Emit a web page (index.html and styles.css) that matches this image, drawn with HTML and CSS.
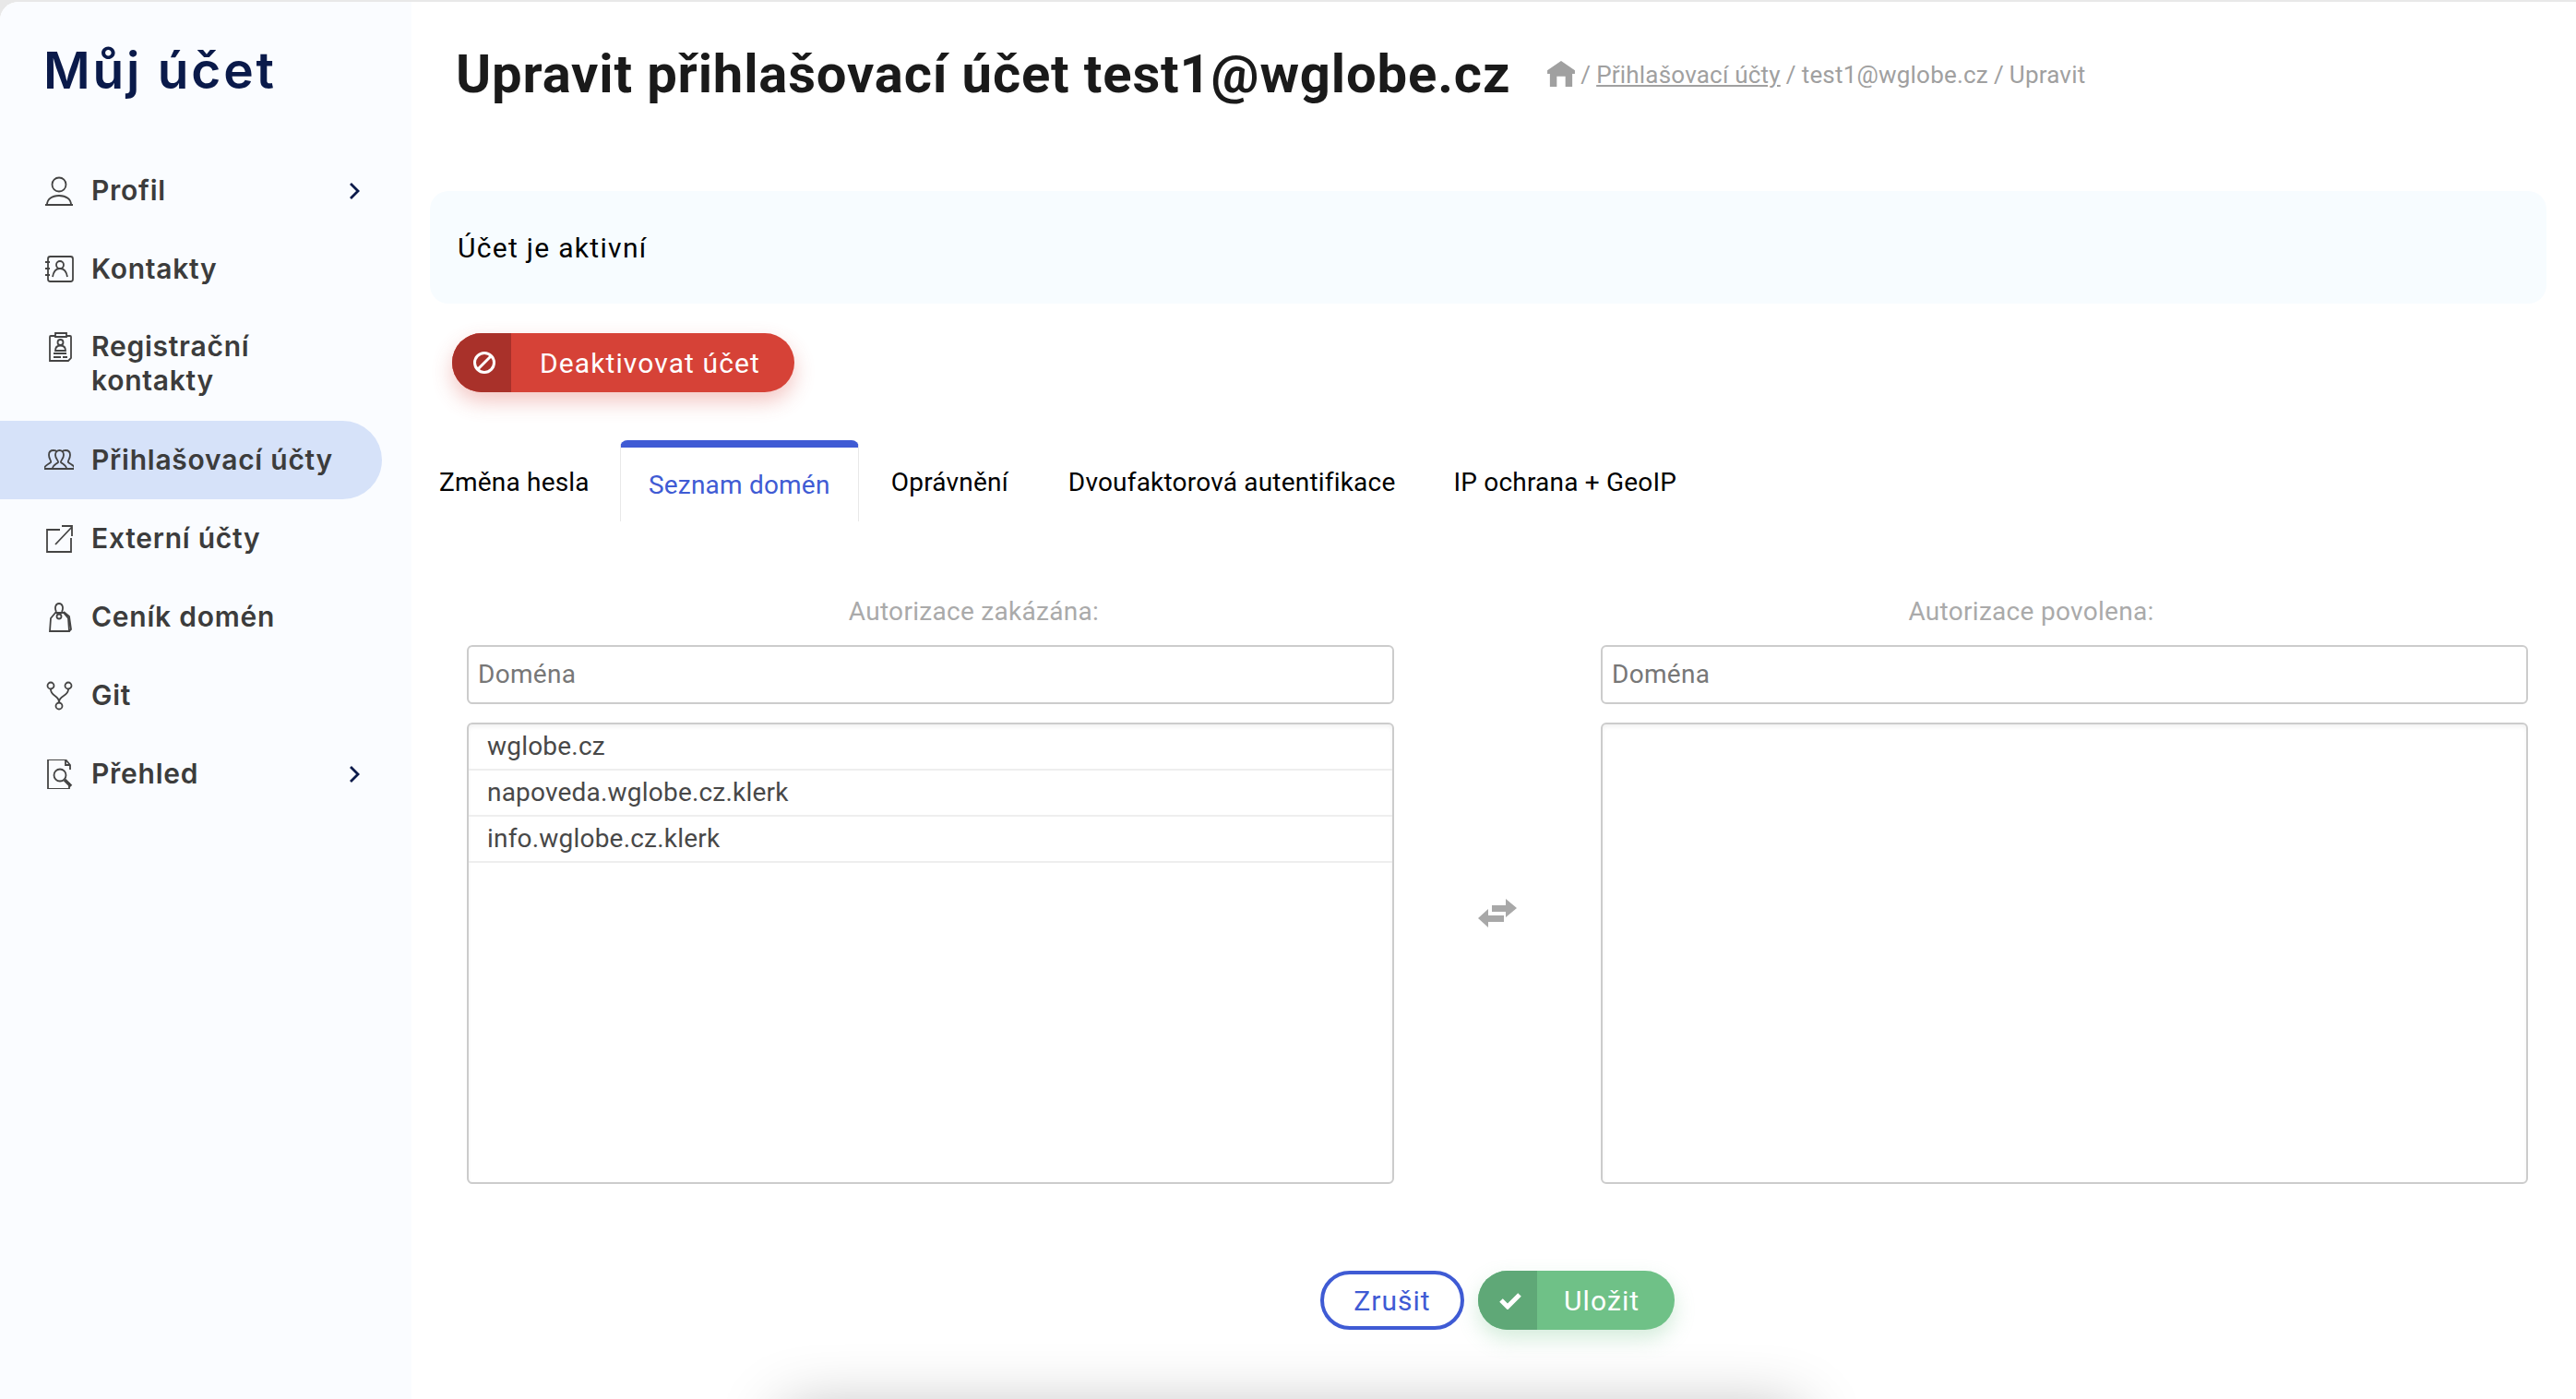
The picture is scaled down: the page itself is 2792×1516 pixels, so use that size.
FILE: index.html
```html
<!DOCTYPE html>
<html lang="cs">
<head>
<meta charset="utf-8">
<title>Upravit přihlašovací účet</title>
<link rel="stylesheet" href="styles.css">
</head>
<body>
<div class="app">
  <aside class="sidebar">
    <h2 class="brand">Můj účet</h2>
    <nav class="nav">
      <a class="nav-item"><svg class="ni" viewBox="0 0 32 32"><circle cx="16" cy="9" r="7.5"/><path d="M1 31h30M3 31c0-6 5-10 13-10s13 4 13 10"/></svg><span class="nl">Profil</span><svg class="chev" viewBox="0 0 12 20"><path d="M2 2l8 8-8 8"/></svg></a>
      <a class="nav-item"><svg class="ni" viewBox="0 0 32 32"><rect x="4" y="2" width="27" height="27" rx="2.5"/><path d="M1 8h5M1 15h5M1 22h5"/><circle cx="17" cy="11" r="4"/><path d="M9 24c1-6 4-9 8-9s7 3 8 9"/></svg><span class="nl">Kontakty</span></a>
      <a class="nav-item nav-tall"><svg class="ni" viewBox="8 10 32 32"><path d="M20 14h-5a1 1 0 0 0-1 1v26h20l3-3V15a1 1 0 0 0-1-1h-4M20 11h12v4H20z"/><circle cx="25.500" cy="21" r="3"/><path d="M20 30c0-4 2-5.500 5.500-5.500S31 26 31 30zM18 33h14M18 37h8M28 37h5"/></svg><span class="nl">Registrační kontakty</span></a>
      <a class="nav-item active"><svg class="ni" viewBox="8 7 32 32"><path d="M8 32h33M8 32c0-4 5-5 7-7 1-2-2-3-2-8 0-3 2-5 5-5 2 0 3 .5 4 1.500M27 13.500c1-1 2-1.500 4-1.500 3 0 5 2 5 5 0 5-3 6-2 8 2 2 7 3 7 7"/><path d="M17 32c0-4 4-5 6-7 1-2-3-3-3-8 0-3 2-5 4.500-5s4.500 2 4.500 5c0 5-4 6-3 8 2 2 6 3 6 7"/></svg><span class="nl">Přihlašovací účty</span></a>
      <a class="nav-item"><svg class="ni" viewBox="0 0 32 32"><path d="M17 6H3v24h26V15M12 22L30 3M19 2h11v11"/></svg><span class="nl">Externí účty</span></a>
      <a class="nav-item"><svg class="ni" viewBox="8 7 32 32"><path d="M20 18l-5 6-1 14h21l-1-14-5-6zM21 17c-2-4-1-9 3-9s5 5 3 9M29 17l6 5 2 14-3 3"/><circle cx="24" cy="22" r="2.500"/></svg><span class="nl">Ceník domén</span></a>
      <a class="nav-item"><svg class="ni" viewBox="0 0 32 32"><circle cx="7" cy="5" r="3.500"/><circle cx="26" cy="5" r="3.500"/><circle cx="16" cy="27" r="3.500"/><path d="M7 9c0 8 9 6 9 14M26 9c0 8-10 6-10 14"/></svg><span class="nl">Git</span></a>
      <a class="nav-item"><svg class="ni" viewBox="8 7 32 32"><path d="M35 32v7H12V7h19l5 6v5M31 7v6h5"/><circle cx="25" cy="24" r="6.500"/><path d="M30 29l7 7" class="thick"/></svg><span class="nl">Přehled</span><svg class="chev" viewBox="0 0 12 20"><path d="M2 2l8 8-8 8"/></svg></a>
    </nav>
  </aside>
  <main class="main">
    <header class="page-head">
      <h1 class="title">Upravit přihlašovací účet test1@wglobe.cz</h1>
      <div class="crumbs">
        <svg class="home" viewBox="0 0 32 30"><path d="M16 0L32 11v4h-3v15h-8V18h-10v12H3V15H0v-4z"/></svg>
        <span>/</span><a class="crumb-link">Přihlašovací účty</a><span>/</span><span>test1@wglobe.cz</span><span>/</span><span>Upravit</span>
      </div>
    </header>
    <section class="alert">Účet je aktivní</section>
    <button class="btn btn-red">
      <span class="btn-ico"><svg class="ban" viewBox="0 0 26 26"><circle cx="13" cy="13" r="10.500"/><path d="M6 20L20 6"/></svg></span>
      <span class="btn-txt">Deaktivovat účet</span>
    </button>
    <div class="tabs">
      <a class="tab tab-first">Změna hesla</a>
      <a class="tab tab-active">Seznam domén</a>
      <a class="tab tab-perm">Oprávnění</a>
      <a class="tab">Dvoufaktorová autentifikace</a>
      <a class="tab">IP ochrana + GeoIP</a>
    </div>
    <div class="dual">
      <div class="col">
        <div class="col-label col-label-l">Autorizace zakázána:</div>
        <input class="filter" placeholder="Doména">
        <ul class="list">
          <li>wglobe.cz</li>
          <li>napoveda.wglobe.cz.klerk</li>
          <li>info.wglobe.cz.klerk</li>
        </ul>
      </div>
      <div class="swap">
        <svg class="swap-ico" viewBox="12 10 42 31"><path d="M27 17h15v-7l12 10-12 10v-6H27z"/><path d="M40 28H23v-7L12 31l11 10v-6h17z"/></svg>
      </div>
      <div class="col">
        <div class="col-label col-label-r">Autorizace povolena:</div>
        <input class="filter" placeholder="Doména">
        <ul class="list"></ul>
      </div>
    </div>
    <div class="actions">
      <button class="btn-outline">Zrušit</button>
      <button class="btn btn-green">
        <span class="btn-ico"><svg class="check" viewBox="0 0 26 20"><path d="M3 10l7 7L23 4"/></svg></span>
        <span class="btn-txt">Uložit</span>
      </button>
    </div>
  </main>
</div>
<div class="bottom-shade"></div>
</body>
</html>
```
FILE: styles.css
```css
* { box-sizing: border-box; }
html, body { height: 100%; }
body {
  margin: 0;
  background: #e8e8e8;
  overflow: hidden;
  position: relative;
  font-family: Roboto, "Liberation Sans", sans-serif;
  color: #000;
}
.app {
  display: flex;
  height: 1514px;
  margin-top: 2px;
  background: #fff;
  border-top-left-radius: 20px;
  overflow: hidden;
}
.sidebar {
  width: 446px;
  flex: none;
  background: #fafcff;
  padding-top: 38px;
}
.brand {
  margin: 0 0 0 47px;
  font: 600 55px/72px Inter, sans-serif;
  letter-spacing: 2.8px;
  color: #0a1a4a;
}
.nav {
  margin-top: 52px;
  display: flex;
  flex-direction: column;
  padding-right: 32px;
}
.nav-item {
  display: flex;
  align-items: center;
  min-height: 85px;
  padding-left: 48px;
  padding-right: 24px;
  border-radius: 0 43px 43px 0;
  font: 600 30px/37px Inter, sans-serif;
  letter-spacing: 0.75px;
  color: #3c3c3c;
}
.nav-tall { min-height: 122px; align-items: flex-start; padding-top: 23px; }
.nav-tall .nl { width: 240px; }
.nav-tall .ni { margin-top: 3px; }
.active { background: #d6e2f9; }
.ni {
  width: 32px;
  height: 32px;
  flex: none;
  fill: none;
  stroke: #444;
  stroke-width: 1.8;
  margin-right: 19px;
}
.thick { stroke-width: 3.5; }
.nl { flex: 1; }
.chev {
  width: 12px;
  height: 20px;
  flex: none;
  fill: none;
  stroke: #0a1a4a;
  stroke-width: 2.8;
}
.main {
  flex: 1;
  padding: 0 32px 0 20px;
  min-width: 0;
}
.page-head {
  height: 156px;
  padding-left: 28px;
  display: flex;
  align-items: flex-start;
  margin-bottom: 49px;
}
.title {
  margin: 0;
  padding-top: 44px;
  font: 700 58px/68px Roboto, sans-serif;
  letter-spacing: 0.83px;
  color: #1a1a1a;
}
.crumbs {
  margin: 64px 0 0 40px;
  display: flex;
  align-items: center;
  gap: 6px;
  font-size: 26px;
  line-height: 30px;
  letter-spacing: 0.2px;
  color: #a0a0a0;
}
.home { width: 30px; height: 28px; fill: #a0a0a0; margin-top: -3px; }
.crumb-link { text-decoration: underline; }
.alert {
  height: 122px;
  border-radius: 20px;
  background: #f7fcff;
  padding-left: 30px;
  display: flex;
  align-items: center;
  font-size: 30px;
  letter-spacing: 1.3px;
}
.btn {
  display: flex;
  align-items: stretch;
  border: 0;
  padding: 0;
  height: 64px;
  border-radius: 32px;
  color: #fff;
  font: 400 30px Roboto, sans-serif;
  letter-spacing: 1.1px;
  overflow: visible;
}
.btn-ico {
  width: 64px;
  display: flex;
  align-items: center;
  justify-content: center;
  padding-left: 5px;
  border-radius: 32px 0 0 32px;
}
.btn-txt { align-self: center; }
.btn-red {
  margin: 32px 0 0 24px;
  width: 371px;
  background: #d64237;
  box-shadow: 0 10px 22px rgba(214, 66, 55, 0.3);
}
.btn-red .btn-ico { background: #a9312a; margin-right: 31px; }
.ban { width: 26px; height: 26px; fill: none; stroke: #fff; stroke-width: 3; }
.tabs {
  display: flex;
  margin-top: 52px;
  height: 88px;
  font-size: 28px;
  letter-spacing: 0.2px;
}
.tab {
  display: flex;
  align-items: center;
  padding-top: 2px;
  margin-right: 63px;
}
.tab-first { margin-left: 10px; margin-right: 33px; }
.tab-active {
  width: 259px;
  justify-content: center;
  padding-top: 0;
  margin-right: 35px;
  border: 1px solid #e8e8e8;
  border-bottom: 0;
  border-top: 8px solid #3f5bd4;
  border-radius: 8px 8px 0 0;
  color: #3f5bd4;
}
.tab-perm { margin-right: 65px; }
.dual {
  display: grid;
  grid-template-columns: 1005px 1fr 1005px;
  margin: 80px 20px 0 40px;
}
.col { min-width: 0; }
.col-label {
  height: 36px;
  line-height: 36px;
  text-align: center;
  font-size: 28px;
  letter-spacing: 0.3px;
  color: #aaa;
  margin-bottom: 18px;
}
.col-label-l { padding-left: 94px; }
.col-label-r { padding-right: 72px; }
.filter {
  display: block;
  width: 100%;
  height: 64px;
  padding: 0 10px 2px;
  border: 2px solid #ccc;
  border-radius: 6px;
  font: 400 28px Roboto, sans-serif;
  letter-spacing: 0.3px;
  color: #444;
  outline: 0;
}
.filter::placeholder { color: #777; opacity: 1; }
.list {
  list-style: none;
  margin: 20px 0 0;
  padding: 0;
  height: 500px;
  border: 2px solid #ccc;
  border-radius: 6px;
  box-shadow: inset 0 3px 4px rgba(0, 0, 0, 0.05);
  font-size: 28px;
  letter-spacing: 0.2px;
  color: #484848;
}
.list li {
  height: 50px;
  line-height: 48px;
  padding-left: 20px;
  border-bottom: 2px solid #eee;
}
.swap {
  display: flex;
  align-items: center;
  justify-content: center;
  padding-top: 50px;
}
.swap-ico { width: 42px; height: 31px; fill: #a8a8a8; filter: blur(0.5px); }
.actions {
  display: flex;
  gap: 15px;
  margin: 94px 0 0 965px;
}
.btn-outline {
  width: 156px;
  height: 64px;
  border: 4px solid #3f5bd4;
  border-radius: 32px;
  background: #fff;
  color: #3f5bd4;
  font: 400 30px Roboto, sans-serif;
  letter-spacing: 1px;
  padding: 0;
}
.btn-green {
  width: 213px;
  background: #6fc187;
  box-shadow: 0 10px 22px rgba(111, 193, 135, 0.3);
}
.btn-green .btn-ico { background: #5fa877; margin-right: 29px; }
.check { width: 26px; height: 20px; fill: none; stroke: #fff; stroke-width: 5; }
.bottom-shade {
  position: absolute;
  left: 850px;
  top: 1530px;
  width: 1100px;
  height: 60px;
  box-shadow: 0 0 70px rgba(0, 0, 0, 0.3);
}
```
